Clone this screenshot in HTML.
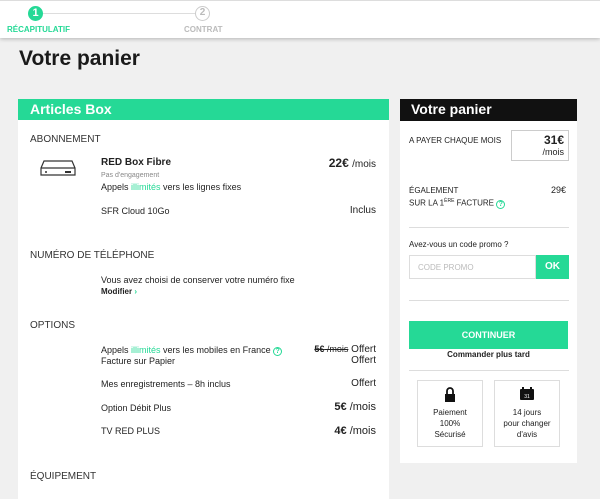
<!DOCTYPE html>
<html><head><meta charset="utf-8"><style>
*{margin:0;padding:0;box-sizing:border-box}
body{width:600px;height:488px;overflow:hidden;background:#f0f0f0;font-family:"Liberation Sans",sans-serif;color:#222;position:relative;font-size:9px}
.a{position:absolute;white-space:nowrap}
.top{position:absolute;left:0;top:0;width:600px;height:38px;background:#fff;box-shadow:0 1px 4px rgba(0,0,0,.25);border-top:1px solid #ddd}
.g{color:#25d996}
.q{display:inline-block;width:9px;height:9px;border:1px solid #25d996;border-radius:50%;color:#25d996;font-size:7px;line-height:7px;text-align:center;font-weight:bold}
.sec{font-size:10px;color:#333}
</style></head><body>
<div class="top">
<div class="a" style="left:38px;top:12px;width:162px;height:1px;background:#ddd"></div>
<div class="a" style="left:28px;top:5px;width:15px;height:15px;border-radius:50%;background:#25d996;color:#fff;font-weight:bold;font-size:11px;text-align:center;line-height:15px">1</div>
<div class="a" style="left:195px;top:5px;width:15px;height:15px;border-radius:50%;background:#fff;border:1.5px solid #ccc;color:#bbb;font-weight:bold;font-size:10px;text-align:center;line-height:12px">2</div>
<div class="a" style="left:7px;top:24px;font-size:8px;font-weight:bold;color:#25d996">RÉCAPITULATIF</div>
<div class="a" style="left:184px;top:24px;font-size:8px;font-weight:bold;color:#bbb">CONTRAT</div>
</div>
<div class="a" style="left:19px;top:47px;font-size:21px;font-weight:bold;color:#1a1a1a">Votre panier</div>

<div class="a" style="left:18px;top:99px;width:371px;height:400px;background:#fff"></div>
<div class="a" style="left:18px;top:99px;width:371px;height:21px;background:#25d996;color:#fff;font-weight:bold;font-size:14px;padding:2px 0 0 12px">Articles Box</div>
<div class="a sec" style="left:30px;top:134px">ABONNEMENT</div>
<svg class="a" style="left:40px;top:159px" width="36" height="18" viewBox="0 0 36 18"><path d="M4 2h28l3 7v7H1V9z M1 9h34" fill="#fff" stroke="#333" stroke-width="1.2"/><circle cx="6" cy="13" r="1" fill="#333"/><rect x="25" y="12" width="6" height="2" fill="#333"/></svg>
<div class="a" style="left:101px;top:157px;font-size:10px;font-weight:bold">RED Box Fibre</div>
<div class="a" style="left:101px;top:172px;font-size:7px;color:#888">Pas d'engagement</div>
<div class="a" style="left:101px;top:182px">Appels <span class="g">illimités</span> vers les lignes fixes</div>
<div class="a" style="left:101px;top:206px">SFR Cloud 10Go</div>
<div class="a" style="right:224px;top:156px;font-size:12px"><b>22€</b> <span style="font-size:10px">/mois</span></div>
<div class="a" style="right:224px;top:205px;font-size:10px">Inclus</div>
<div class="a sec" style="left:30px;top:250px">NUMÉRO DE TÉLÉPHONE</div>
<div class="a" style="left:101px;top:275px">Vous avez choisi de conserver votre numéro fixe</div>
<div class="a" style="left:101px;top:287px;font-size:8px;font-weight:bold">Modifier <span class="g">›</span></div>
<div class="a sec" style="left:30px;top:320px">OPTIONS</div>
<div class="a" style="left:101px;top:345px">Appels <span class="g">illimités</span> vers les mobiles en France <span class="q">?</span></div>
<div class="a" style="left:101px;top:356px">Facture sur Papier</div>
<div class="a" style="left:101px;top:379px">Mes enregistrements – 8h inclus</div>
<div class="a" style="left:101px;top:403px">Option Débit Plus</div>
<div class="a" style="left:101px;top:426px">TV RED PLUS</div>
<div class="a" style="right:224px;top:344px;font-size:10px"><s style="font-size:9px"><b>5€</b> /mois</s> Offert</div>
<div class="a" style="right:224px;top:355px;font-size:10px">Offert</div>
<div class="a" style="right:224px;top:378px;font-size:10px">Offert</div>
<div class="a" style="right:224px;top:401px;font-size:11px"><b>5€</b> /mois</div>
<div class="a" style="right:224px;top:425px;font-size:11px"><b>4€</b> /mois</div>
<div class="a sec" style="left:30px;top:471px">ÉQUIPEMENT</div>

<div class="a" style="left:400px;top:99px;width:177px;height:364px;background:#fff"></div>
<div class="a" style="left:400px;top:99px;width:177px;height:22px;background:#111;color:#fff;font-weight:bold;font-size:14px;padding:2px 0 0 11px">Votre panier</div>
<div class="a" style="left:409px;top:136px;font-size:8px">A PAYER CHAQUE MOIS</div>
<div class="a" style="left:511px;top:130px;width:58px;height:31px;border:1px solid #ccc;text-align:right;padding:2px 4px 0 0"><b style="font-size:12px">31€</b><br><span style="font-size:9px">/mois</span></div>
<div class="a" style="left:409px;top:185px;font-size:8px;line-height:11px">ÉGALEMENT<br>SUR LA 1<sup style="font-size:5px">ÈRE</sup> FACTURE <span class="q">?</span></div>
<div class="a" style="left:551px;top:185px;font-size:9px">29€</div>
<div class="a" style="left:409px;top:227px;width:160px;height:1px;background:#ddd"></div>
<div class="a" style="left:409px;top:240px;font-size:8px">Avez-vous un code promo ?</div>
<div class="a" style="left:409px;top:255px;width:127px;height:24px;border:1px solid #ddd;color:#bbb;font-size:8px;padding:7px 0 0 8px">CODE PROMO</div>
<div class="a" style="left:536px;top:255px;width:33px;height:24px;background:#25d996;color:#fff;font-weight:bold;font-size:10px;text-align:center;line-height:24px">OK</div>
<div class="a" style="left:409px;top:300px;width:160px;height:1px;background:#ddd"></div>
<div class="a" style="left:409px;top:321px;width:159px;height:28px;background:#25d996;color:#fff;font-weight:bold;font-size:9px;text-align:center;line-height:28px">CONTINUER</div>
<div class="a" style="left:409px;top:350px;width:159px;text-align:center;font-weight:bold;font-size:8px">Commander plus tard</div>
<div class="a" style="left:409px;top:370px;width:160px;height:1px;background:#ddd"></div>
<div class="a" style="left:417px;top:380px;width:66px;height:67px;border:1px solid #ddd;text-align:center;font-size:8px;line-height:11px;padding-top:26px">Paiement<br>100%<br>Sécurisé</div>
<svg class="a" style="left:444px;top:387px" width="12" height="15" viewBox="0 0 12 15"><path d="M3 7V4a3 3 0 0 1 6 0v3" fill="none" stroke="#111" stroke-width="1.8"/><rect x="1" y="7" width="10" height="8" fill="#111"/></svg>
<div class="a" style="left:494px;top:380px;width:66px;height:67px;border:1px solid #ddd;text-align:center;font-size:8px;line-height:11px;padding-top:26px">14 jours<br>pour changer<br>d'avis</div>
<svg class="a" style="left:519px;top:387px" width="16" height="14" viewBox="0 0 16 14"><rect x="1" y="2" width="14" height="11" rx="1" fill="#111"/><rect x="3" y="0" width="2" height="3" fill="#111"/><rect x="11" y="0" width="2" height="3" fill="#111"/><text x="8" y="11" font-size="5" fill="#fff" text-anchor="middle" font-family="Liberation Sans">31</text></svg>
</body></html>
